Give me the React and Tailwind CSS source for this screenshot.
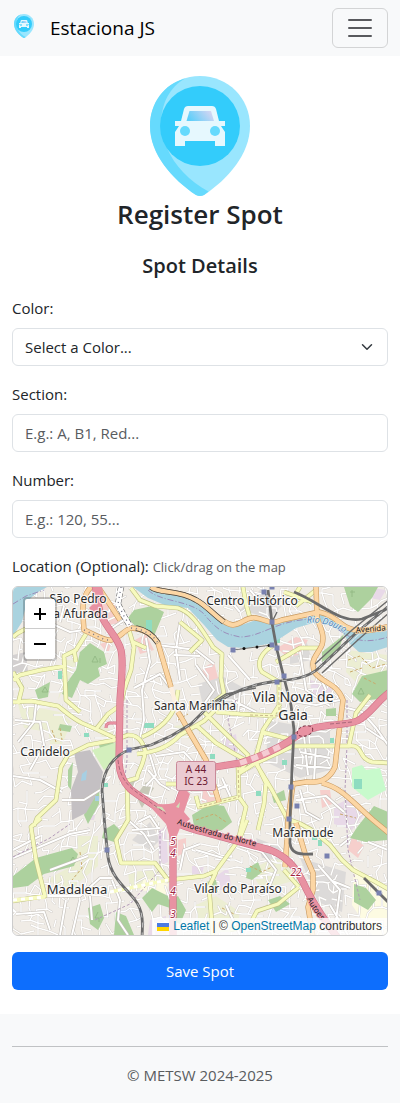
import React from "react";

const water =
  "M13 587H47L38 592L27 601L22 622L13 636Z M133 587H152L166 592L190 597L206 607L216 618L233 628L256 620L276 623L306 618L319 613L339 622L356 633L388 630V647L372 652L359 652L349 643L343 633L329 625L313 623L296 628L273 643L246 648L228 647L217 640L204 625L188 608L167 606L148 598Z";

const greens = [
  "M80 652L90 643L104 652L107 664L98 668L100 676L88 684L80 680L72 698L62 694L66 684L76 670Z",
  "M35 690L50 682L48 697L38 699Z",
  "M134 610L152 606L164 612L154 636L140 632L128 618Z",
  "M344 587H378L372 598L358 612L350 606Z",
  "M322 652L340 638L344 634L338 652L322 662Z",
  "M352 694L362 676L388 670V698L370 700L360 702Z",
  "M68 770L73 762L71 790L68 786Z",
  "M92 790L100 782L99 804L88 824L84 815Z",
  "M99 745L112 740L118 752L110 766L104 762Z",
  "M192 815L210 804L224 806L232 822L222 830L206 834L194 826Z",
  "M13 876L36 858L72 848L78 854L74 866L44 874L28 886L13 888Z",
  "M358 826L374 806L388 812V840L366 842L350 838Z",
  "M142 898L152 888L168 896L170 908L158 904L152 912Z",
  "M88 908L100 904L104 918L98 930L90 924Z",
  "M354 884L366 888L376 900L368 910L354 902Z",
  "M206 882L216 880L218 892L204 893Z",
  "M116 912L126 916L134 935H114Z",
  "M272 796L284 790L286 800L274 803Z",
  "M326 709L336 708L336 716L326 716Z",
  "M168 900L178 896L186 910L180 924L170 920Z",
  "M248 868L258 862L262 872L252 880L246 878Z",
  "M60 724L72 726L70 732L58 730Z",
  "M104 830L114 824L120 830L114 842L102 838Z",
  "M268 900L280 896L290 904L276 912Z",
];

const pales = [
  "M18 704L60 712L72 722L48 732L24 728Z",
  "M48 726L70 726L62 744L50 744Z",
  "M348 650L388 655V678L360 686L346 672Z",
  "M78 836L98 836L98 866L70 890L46 880L72 866Z",
  "M196 905L216 896L240 912L236 932H196Z",
  "M94 724L108 728L118 736L104 740Z",
  "M60 690L66 660L78 660L58 700Z",
  "M174 726L190 724L196 740L184 738Z",
  "M128 872L158 870L160 886L130 890Z",
  "M250 870L290 850L296 880L262 890Z",
];

const sands = ["M354 866L388 892V935H372L352 905Z", "M144 878L168 884L166 894L140 890Z"];

const lilacs = [
  "M372 588L386 590L380 600L370 598Z",
  "M334 806L350 798L366 812L352 830L334 824Z",
  "M92 806L98 804L94 820L90 820Z",
  "M216 876L228 868L232 890L220 890Z",
  "M222 740L236 734L238 752L226 750Z",
  "M158 832L166 826L168 862L160 866Z",
  "M310 680L332 686L330 700L312 698Z",
  "M150 920L166 916V935H148Z",
  "M192 866L204 866L202 874L192 874Z",
];

const pinks = [
  "M99 605L114 601L120 622L108 632L100 622Z",
  "M135 640L146 634L154 650L140 654Z",
  "M277 648L296 637L308 640L300 654L288 658Z",
  "M352 834L364 846L358 858L348 850Z",
  "M202 790L216 794L214 803L202 802Z",
  "M320 790L330 790L332 804L322 808Z",
  "M178 840L186 838L186 852L178 856Z",
  "M202 668L214 662L218 678L206 682Z",
  "M100 644L112 640L108 654Z",
];

const greys = [
  "M198 684L222 676L244 688L236 708L204 710Z",
  "M268 720L300 726L330 730L330 770L300 778L266 762Z",
  "M290 640L306 640L312 660L290 664Z",
  "M240 610L262 588L282 606L270 618Z",
  "M256 838L288 850L282 860L262 858Z",
  "M300 858L346 872L342 912L318 902Z",
  "M132 840L150 822L160 840L150 850Z",
];

const motorways = [
  "M95 585C98 598 97 609 103 619C109 631 118 638 121 650C124 664 121 682 120 700L119 760C119 772 122 781 130 789C142 799 158 806 170 818C174 824 173 840 173 852V937",
  "M168 820C180 824 188 829 204 832C226 838 248 844 270 850C286 856 295 866 303 882C310 898 320 914 337 937",
  "M173 822C178 800 183 788 190 776 M215 767L240 763C260 757 282 747 298 735C318 722 341 727 357 721C370 715 376 702 390 692",
];

const oranges = [
  "M91 587C80 598 83 614 84 630C96 635 104 641 111 640C120 638 124 630 131 628C144 629 153 635 158 643L165 667L171 687",
  "M178 712L181 717L190 733L206 760L219 802",
  "M98 587C106 598 112 608 120 620",
  "M151 587C160 594 178 589 196 600C210 608 222 624 233 625C243 624 246 616 256 618C267 620 270 625 282 620L319 612C330 614 336 620 346 627C360 634 374 630 390 626",
  "M316 585L317 617C320 628 325 634 322 645C317 656 309 660 315 673C324 684 337 683 343 700L338 740L335 767C329 780 320 783 306 782L293 784L288 820L287 840L285 867",
  "M322 783C342 788 350 800 373 820L390 834",
  "M296 823L306 857L313 873L313 890L308 907L313 937",
];

const yellows = [
  "M13 637C22 628 34 627 48 622",
  "M86 634L76 650L64 656L66 700L80 712",
  "M74 650L76 662",
  "M13 680L20 675L41 670L66 666",
  "M13 672L22 688L18 704",
  "M129 630L134 647L131 670L124 690L122 700",
  "M131 588L140 600L155 606L178 608C190 612 197 621 213 647L222 654L221 678L224 694L204 710",
  "M133 642L146 648 M180 622L202 640L190 652",
  "M243 587L246 604L250 618",
  "M284 592L312 602 M300 587L292 600 M316 590L296 606",
  "M276 644C260 652 256 664 262 672L279 682V716",
  "M276 662L300 648L319 648",
  "M13 702L31 701L58 706C67 713 72 718 82 723L98 730L115 738",
  "M122 704L108 714L97 728",
  "M34 826L37 818L56 800L61 767L68 755L88 745L115 740L128 735C140 735 143 744 145 750C145 764 138 770 137 778L127 781",
  "M137 754C154 752 168 748 180 735L204 721L218 707",
  "M142 737C156 731 170 722 176 704L178 690",
  "M127 783L128 820L116 840L121 863L155 863L168 880L204 876L216 871L240 838L247 820",
  "M41 818L31 827L36 860L45 896L13 901",
  "M196 725L216 743L233 753L249 762",
  "M204 712L222 730L248 755L247 762L238 773",
  "M216 712L240 714L276 716",
  "M280 704L263 730L255 760L266 783L264 804L258 830",
  "M255 762L272 790L290 824",
  "M262 732L293 740",
  "M238 774L254 764L276 754L293 746L349 746C364 744 357 758 372 762L390 763",
  "M349 745L356 713L370 695",
  "M238 765L239 797L199 807L196 796",
  "M239 797L246 807L239 837",
  "M290 820C310 826 318 835 330 845L342 860L353 870L374 881L390 890",
  "M216 872L209 887L213 937",
  "M299 887L278 904L257 911L250 924L230 930",
  "M284 870L299 887",
  "M166 784L178 784",
];

// Broader local streets, drawn above the small network.
const locals = [
  "M15 720L40 722L44 745L30 770 M13 776L40 780L62 792 M36 704L34 722L18 742",
  "M112 628L124 620 M48 622L70 632L84 630 M64 606L60 622",
  "M146 638L150 662L142 690L144 720L140 738 M134 688L160 674L172 690",
  "M180 622L176 650L180 680 M158 645L196 650L214 664 M174 655L200 656",
  "M196 665L214 690L204 704 M228 655L250 680 M232 700L256 712 M240 690L238 714",
  "M300 652L306 690L330 706 M286 700L316 705L340 700 M312 660L326 690",
  "M340 706L362 712L376 728L388 745 M366 728L384 740",
  "M148 770L160 784L170 790 M150 755L156 775L146 786 M156 756L184 752L196 765",
  "M128 820L144 834L154 850 M132 830L160 828 M138 822L150 816L158 828",
  "M13 850L40 836 M13 858L70 834L90 830 M62 800L84 800L100 790",
  "M46 896L80 896L100 878L112 878 M66 900L60 935 M80 900L72 935 M16 914L44 912L50 930",
  "M112 880L120 900L118 920L128 935 M90 896L92 920 M50 870L88 856",
  "M180 870L184 850L200 844 M196 850L230 860 M240 846L262 852L276 870L268 890",
  "M300 790L306 812L320 820 M296 800L326 796L344 812",
  "M318 865L340 890L336 920 M330 880L350 888 M330 905L348 935 M226 905L240 935",
  "M222 778L232 800 M216 790L228 785 M300 752L330 758 M304 736L308 775 M316 745L314 780 M296 765L330 768",
  "M340 846L350 838 M368 842L388 850 M230 600L240 612 M250 590L262 604L280 600",
];

const rails = [
  "M268 590L272 623L277 650L284 678L291 705L294 730L292 770L290 820V843C291 853 298 855 313 854",
  "M390 605L356 633L319 668C308 678 292 680 271 682C242 686 220 699 204 711L191 724L171 736L151 745L132 749C112 755 103 772 102 790L105 828L108 857C111 878 127 889 135 900C143 910 143 922 142 937",
  "M294 592C320 602 340 624 362 619L390 608",
  "M364 878L390 904",
];

const stations = [
  [264, 592], [272, 587], [272, 622], [233, 650], [272, 645], [277, 648],
  [284, 676], [277, 682], [294, 737], [291, 787], [297, 806], [289, 819],
  [327, 856], [379, 893], [129, 750], [107, 850],
];

// Deterministic network of minor streets on a jittered lattice.
function buildStreets() {
  let seed = 7;
  const rnd = () => {
    seed = (seed * 16807) % 2147483647;
    return seed / 2147483647;
  };
  const step = 8;
  const cols = 50;
  const rows = 48;
  const pts = [];
  for (let r = 0; r < rows; r++) {
    pts.push([]);
    for (let c = 0; c < cols; c++) {
      const x = 5 + c * step + Math.sin(r / 4 + c / 7) * 8 + (rnd() - 0.5) * 6;
      const y = 578 + r * step + Math.sin(c / 5 - r / 6) * 9 + (rnd() - 0.5) * 6;
      pts[r].push([Math.round(x), Math.round(y)]);
    }
  }
  let d = "";
  for (let r = 0; r < rows - 1; r++) {
    for (let c = 0; c < cols - 1; c++) {
      const [x, y] = pts[r][c];
      if (rnd() < 0.5) d += `M${x} ${y}L${pts[r][c + 1].join(" ")}`;
      if (rnd() < 0.5) d += `M${x} ${y}L${pts[r + 1][c].join(" ")}`;
    }
  }
  return d;
}
const streets = buildStreets();

function Roads({ paths, casing, fill, width }) {
  const d = paths.join(" ");
  return (
    <g fill="none" strokeLinejoin="round">
      <path d={d} stroke={casing} strokeWidth={width + 1.2} />
      <path d={d} stroke={fill} strokeWidth={width} />
    </g>
  );
}

function Place({ x, y, size = 12, children }) {
  return (
    <text
      x={x}
      y={y}
      fontSize={size}
      textAnchor="middle"
      fill="#2c2c2c"
      stroke="#ffffff"
      strokeOpacity="0.75"
      strokeWidth="2.5"
      strokeLinejoin="round"
      paintOrder="stroke"
    >
      {children}
    </text>
  );
}

function MapDrawing() {
  return (
    <svg
      viewBox="13 587 374 348"
      preserveAspectRatio="xMidYMid slice"
      className="block h-full w-full font-['Noto_Sans',sans-serif]"
      role="img"
      aria-label="Map of Vila Nova de Gaia"
    >
      <rect x="-400" y="387" width="1200" height="800" fill="#f0ece6" />
      <path d={pales.join(" ")} fill="#eceed3" />
      <path d={sands.join(" ")} fill="#fdfbe2" />
      <path d={greys.join(" ")} fill="#dcdad9" />
      <path d={lilacs.join(" ")} fill="#e8d9e8" />
      <path d={pinks.join(" ")} fill="#f6cfcc" />
      <path d="M13 655L26 652L28 672L13 678Z" fill="#d3d0d0" />
      <path d="M136 796L146 782L154 788L142 808Z M126 782L136 778L132 792Z" fill="#c7c8b8" />
      <path d={streets} fill="none" stroke="#cfcac4" strokeWidth="2.1" strokeLinecap="round" />
      <path d={streets} fill="none" stroke="#ffffff" strokeWidth="1.4" strokeLinecap="round" />
      <path d={greens.join(" ")} fill="#add19e" />
      <path d="M92 750L118 742L120 756L112 764L104 770Z" fill="#d3efbd" />
      <path d="M74 753L90 750L103 772L100 788L86 813L72 820L71 790L78 772Z" fill="#c4c0c3" />
      <path d="M82 774L87 770L86 780L81 781Z M95 796h4v5h-4z" fill="#a6cfe3" />
      <path d="M352 768L362 765L366 770L380 768L386 790L368 800L352 787Z" fill="#c8facc" />
      <g fill="#8fdcc0">
        <path d="M146 620h6v12h-6z M144 723h10v5h-10z M354 779h8v10h-8z M210 754h5v5h-5z M104 783h4v4h-4z M276 638h4v5h-4z M58 671h4v8h-4z M282 760h5v5h-5z M312 835h5v5h-5z M330 738h4v5h-4z M246 868h5v4h-5z M318 840h4v6h-4z M256 791h5v5h-5z M84 733h5v4h-5z" />
      </g>
      <g fill="none" stroke="#c9a96b" strokeWidth="1" strokeDasharray="3 2">
        <path d="M348 660L360 656L372 668L386 664 M350 672L362 668 M52 730L56 742 M60 728L62 740 M364 678L376 684 M80 852L82 868L72 880 M250 866L262 872L274 866 M196 820L214 814L226 822 M222 908L234 914 M340 814L356 818 M178 720L188 714" />
      </g>
      <g fill="none" stroke="#8fb681" strokeWidth="0.8">
        <path d="M92 662l3-6 3 6zM100 658v5M42 692l3-5 3 5zM98 912l-3 6h4v4M350 592h5M352 590v7M358 694l3-6 3 6zM70 862l3-5 3 5z" />
      </g>
      <Roads paths={locals} casing="#c3beb8" fill="#ffffff" width={2} />
      <path d={water} fill="#aad3df" />
      <path
        d="M13 604L26 596L44 590 M148 590C160 602 190 600 204 614C220 634 228 634 240 637C262 637 276 620 313 619 M329 622C350 640 362 645 388 637"
        fill="none"
        stroke="#9a8dba"
        strokeWidth="1"
        strokeDasharray="6 2 1 2"
      />
      <path
        d="M127 700V760L124 785 M13 857L50 838L70 824 M95 920L130 904L160 870V830 M347 700V745L345 790L348 850L360 900 M236 700L228 720L238 765 M118 690V720"
        fill="none"
        stroke="#b39bb9"
        strokeWidth="1"
        strokeDasharray="3 2"
      />
      <Roads paths={yellows} casing="#bfc184" fill="#f7fabf" width={3.4} />
      <path d="M13 900L45 897 M110 892L168 880" fill="none" stroke="#f7fabf" strokeWidth="3.4" />
      <path d="M13 900L45 897 M110 892L168 880" fill="none" stroke="#ffffff" strokeWidth="3" strokeDasharray="4 4" />
      <path d="M238 765L239 797L199 807 M279 682V716L250 715" fill="none" stroke="#c8b98c" strokeWidth="1" strokeDasharray="3 2" />
      <path d="M171 687L175 702L178 712" stroke="#fcefe0" strokeWidth="4.4" fill="none" />
      <Roads paths={oranges} casing="#c99b62" fill="#fcd6a4" width={4.2} />
      <path d="M151 587C160 594 178 589 196 600C206 605 214 615 224 622 M136 628C147 630 153 635 158 643" fill="none" stroke="#444444" strokeWidth="5.6" />
      <path d="M151 587C160 594 178 589 196 600C206 605 214 615 224 622 M136 628C147 630 153 635 158 643" fill="none" stroke="#fcd6a4" strokeWidth="4.2" />
      <path d="M121 587L118 604L124 616L130 626" fill="none" stroke="#555555" strokeWidth="6" strokeDasharray="4 2" />
      <path d="M121 587L118 604L124 616L130 626" fill="none" stroke="#ffffff" strokeWidth="5" />
      <path d="M84 630C96 635 104 641 111 640 M131 628C144 629 153 635 158 643 M121 587L118 604L124 616L130 626" fill="none" stroke="#777788" strokeWidth="1.4" strokeDasharray="1 4" />
      <path d="M120 723H110Q106 723 106 728" fill="none" stroke="#cf6f86" strokeWidth="3" />
      <path d="M120 723H110Q106 723 106 728" fill="none" stroke="#e892a2" strokeWidth="2.2" />
      <Roads paths={motorways} casing="#cf6f86" fill="#e892a2" width={6} />
      <path d="M146 802Q162 806 174 803L186 790L190 794L184 812L190 819L180 828L176 838H170L166 824Z" fill="#e892a2" />
      <path d="M153 806L162 807L166 812Z M176 807L180 802L179 808Z" fill="#cfe0b8" />
      <path d="M89 608L97 600L100 620L92 612Z M93 587h9l3 14-8 2z" fill="#e892a2" />
      <path d="M240 763C256 758 270 751 281 746" fill="none" stroke="#f5ccd3" strokeWidth="5.5" strokeDasharray="7 5" />
      <ellipse cx="305" cy="731" rx="8" ry="5" fill="#e892a2" stroke="#7c3648" strokeDasharray="3 2" transform="rotate(-18 305 731)" />
      <path d="M118 760C120 780 130 788 142 796L166 814 M330 724L352 722" fill="none" stroke="#a8677a" strokeWidth="1" strokeDasharray="4 2" />
      <path d={rails.join(" ")} fill="none" stroke="#6b6b6b" strokeWidth="2.8" strokeLinejoin="round" />
      <path d={rails[1]} fill="none" stroke="#d8d8d8" strokeWidth="0.8" strokeDasharray="5 5" />
      <path d="M390 612L359 639L322 673 M390 599L352 630L315 664 M268 600L264 590 M272 622L277 612 M204 708L226 694L256 688" fill="none" stroke="#6b6b6b" strokeWidth="1.4" />
      <path d="M390 608L357 636L321 670" fill="none" stroke="#eeeeee" strokeWidth="0.8" />
      <path d="M233 650L272 645" stroke="#555555" strokeWidth="0.8" />
      <g fill="#111111">
        <circle cx="244" cy="648.5" r="1.5" />
        <circle cx="257" cy="647" r="1.5" />
        <circle cx="269" cy="645.5" r="1.5" />
      </g>
      <g fill="#7981b0">
        {stations.map(([x, y]) => (
          <rect key={`${x}-${y}`} x={x - 2.5} y={y - 2.5} width="5" height="5" />
        ))}
      </g>
      <Place x={78} y={603}>São Pedro</Place>
      <Place x={77} y={618}>da Afurada</Place>
      <Place x={252} y={605}>Centro Histórico</Place>
      <Place x={195} y={710}>Santa Marinha</Place>
      <Place x={293} y={702} size={14}>Vila Nova de</Place>
      <Place x={293} y={720} size={14}>Gaia</Place>
      <Place x={45} y={756}>Canidelo</Place>
      <Place x={303} y={837}>Mafamude</Place>
      <Place x={77} y={894} size={13}>Madalena</Place>
      <Place x={238} y={893}>Vilar do Paraíso</Place>
      <defs>
        <path id="norte" d="M177 824C188 828 204 833 222 838S246 843 266 850" />
        <path id="auto" d="M307 899C312 910 322 924 342 943" />
        <path id="douro" d="M307 623C322 621 336 627 354 638" />
      </defs>
      <text fontSize="9" fill="#4f86b8" stroke="#ffffff" strokeOpacity="0.6" strokeWidth="1.5" paintOrder="stroke" fontStyle="italic">
        <textPath href="#douro">Rio Douro</textPath>
      </text>
      <g fontSize="8" fill="#222222">
        <text stroke="#fcd6a4" strokeWidth="1.5" paintOrder="stroke" x="356" y="633" transform="rotate(-5 356 633)">Avenida</text>
        <text stroke="#e892a2" strokeWidth="1.5" paintOrder="stroke"><textPath href="#norte">Autoestrada do Norte</textPath></text>
        <text stroke="#e892a2" strokeWidth="1.5" paintOrder="stroke"><textPath href="#auto">Autoes</textPath></text>
      </g>
      <g fontSize="10" textAnchor="middle" fill="#a0233f" stroke="#ffffff" strokeWidth="2" paintOrder="stroke" fontStyle="italic">
        <text x="173" y="845">5</text>
        <text x="173" y="857">4</text>
        <text x="173" y="895">4</text>
        <text x="173" y="918">3</text>
        <text x="296" y="876">22</text>
      </g>
      <rect x="176.500" y="761.500" width="39" height="29" rx="2" fill="#ebcbd2" stroke="#c98a99" />
      <g fontSize="10" textAnchor="middle" fill="#6d1a32">
        <text x="196" y="773">A 44</text>
        <text x="196" y="785">IC 23</text>
      </g>
    </svg>
  );
}

function PinLogo({ className, id }) {
  return (
    <svg viewBox="0 0 100 120" className={className} aria-hidden="true">
      <defs>
        <linearGradient id={id} x1="0" y1="0.500" x2="1" y2="0.200">
          <stop offset="0" stopColor="#5dcffa" />
          <stop offset="1" stopColor="#dcd6f2" />
        </linearGradient>
      </defs>
      <path d="M50 0C78 0 100 22 100 50C100 78 78 103 54 119Q50 121 46 119C22 103 0 78 0 50C0 22 22 0 50 0Z" fill="#99e6fe" />
      <path d="M35 2.500C14 8 0 27 0 50C0 78 22 103 46 119Q50 121 54 119L58.500 115.500C40 106 24 89 17 72L11 50C11 27 20 11 35 2.500Z" fill="#66dafd" />
      <circle cx="50" cy="50" r="40" fill="#33ccfb" />
      <path d="M38 30H62Q65 30 66 33L69 45H75V50H71L75 56V70H65V65H35V70H25V56L29 50H25V45H31L34 33Q35 30 38 30Z" fill="#e6f8fe" />
      <path d="M39.500 35H61L64 45H36.500Z" fill={`url(#${id})`} />
      <circle cx="35" cy="55" r="5" fill="#66dafd" />
      <circle cx="65" cy="55" r="5" fill="#66dafd" />
    </svg>
  );
}

function TextField({ id, label, placeholder }) {
  return (
    <div className="mb-4">
      <label htmlFor={id} className="mb-2 block">{label}</label>
      <input
        id={id}
        type="text"
        placeholder={placeholder}
        className="block h-[38px] w-full rounded-md border border-[#dee2e6] bg-white px-3 placeholder:text-[#595c5f]"
      />
    </div>
  );
}

export default function App() {
  return (
    <div className="bg-white font-['Segoe_UI','Open_Sans','Noto_Sans',sans-serif] text-[15px] leading-6 text-[#212529]">
      <header className="flex h-14 items-center justify-between bg-[#f8f9fa] px-3">
        <a href="#home" className="flex items-center gap-4 pl-0.5 text-black">
          <PinLogo id="glass-small" className="mb-1 h-6 w-5" />
          <span className="text-[19px] leading-[30px]">Estaciona JS</span>
        </a>
        <button type="button" aria-label="Toggle navigation" className="flex h-10 w-14 items-center justify-center rounded-md border border-[#d3d4d5]">
          <svg viewBox="0 0 30 30" className="size-[30px]" aria-hidden="true">
            <path d="M4 7h22M4 15h22M4 23h22" stroke="#58595d" strokeWidth="2" strokeLinecap="round" />
          </svg>
        </button>
      </header>

      <main className="px-3 pt-5 pb-6">
        <PinLogo id="glass-large" className="mx-auto h-[120px] w-[100px]" />
        <h1 className="text-center text-[26px] leading-9 font-semibold">Register Spot</h1>
        <h2 className="mt-5 mb-4 text-center text-[20px] leading-7 font-semibold">Spot Details</h2>

        <form>
          <div className="mb-4">
            <label htmlFor="color" className="mb-2 block">Color:</label>
            <div className="relative">
              <select id="color" className="block h-[38px] w-full appearance-none rounded-md border border-[#dee2e6] bg-white pr-9 pl-3">
                <option>Select a Color...</option>
              </select>
              <svg viewBox="0 0 16 16" className="pointer-events-none absolute top-[13px] right-[15px] h-3 w-3" aria-hidden="true">
                <path d="m2 5 6 6 6-6" fill="none" stroke="#343a40" strokeWidth="2" strokeLinecap="round" strokeLinejoin="round" />
              </svg>
            </div>
          </div>
          <TextField id="section" label="Section:" placeholder="E.g.: A, B1, Red..." />
          <TextField id="number" label="Number:" placeholder="E.g.: 120, 55..." />

          <p className="mb-2">
            Location (Optional): <small className="text-[13px] leading-5 text-[#595c5f]">Click/drag on the map</small>
          </p>
          <div className="relative h-[350px] overflow-hidden rounded-md border border-[#cccccc]">
            <MapDrawing />
            <div className="absolute top-2.5 left-2.5 flex flex-col rounded-sm border-2 border-black/20 bg-white bg-clip-padding text-black">
              <button type="button" aria-label="Zoom in" className="flex size-[30px] items-center justify-center border-b border-[#cccccc]">
                <svg viewBox="0 0 12 12" className="size-3" aria-hidden="true"><path d="M0 6h12M6 0v12" stroke="currentColor" strokeWidth="2" /></svg>
              </button>
              <button type="button" aria-label="Zoom out" className="flex size-[30px] items-center justify-center">
                <svg viewBox="0 0 12 12" className="size-3" aria-hidden="true"><path d="M0 6h12" stroke="currentColor" strokeWidth="2" /></svg>
              </button>
            </div>
            <div className="absolute right-0 bottom-0 flex items-center bg-white/80 px-[5px] font-['Liberation_Sans',sans-serif] text-xs leading-[17px] whitespace-pre text-[#333333]">
              <a href="#leaflet" className="flex items-center gap-1 text-[#0078a8]">
                <svg viewBox="0 0 12 8" className="h-2 w-3" aria-hidden="true">
                  <path fill="#4c7be1" d="M0 0h12v4H0z" />
                  <path fill="#ffd500" d="M0 4h12v4H0z" />
                </svg>
                Leaflet
              </a>
              <span> | © </span>
              <a href="#osm" className="text-[#0078a8]">OpenStreetMap</a>
              <span> contributors</span>
            </div>
          </div>
          <button type="submit" className="mt-4 block h-[38px] w-full rounded-md bg-[#0d6efd] text-white">Save Spot</button>
        </form>
      </main>

      <footer className="bg-[#f8f9fa] px-3 pt-8 pb-4 text-center text-[#595c5f]">
        <hr className="mb-4 border-[#c0c2c4]" />
        <p>© METSW 2024-2025</p>
      </footer>
    </div>
  );
}
